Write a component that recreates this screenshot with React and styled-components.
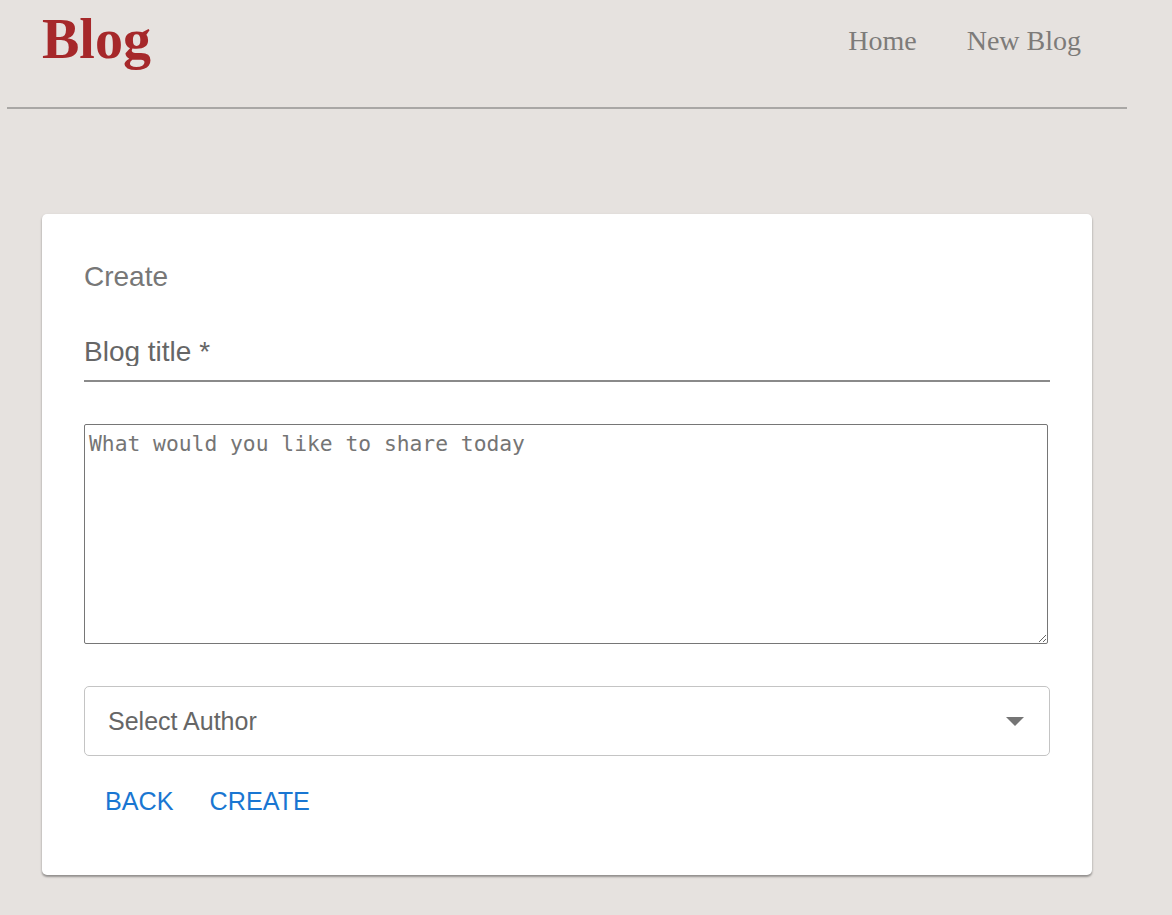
import styled, { createGlobalStyle } from 'styled-components';

const GlobalStyle = createGlobalStyle`
    body {
        margin: 0;
        background-color: #e6e2df;
        font-family: "Liberation Sans", Arial, sans-serif;
    }
`;

const Header = styled.header`
    display: flex;
    justify-content: space-between;
    align-items: flex-start;
    width: 1120px;
    height: 109px;
    margin-left: 7px;
    padding: 0 46px 0 35px;
    box-sizing: border-box;
    border-bottom: 2px solid #a9a7a5;
`;

const Logo = styled.h1`
    margin: 11px 0 0;
    font-family: "Liberation Serif", "Times New Roman", serif;
    font-size: 56px;
    line-height: 1;
    font-weight: 700;
    color: #a6282a;
`;

const Nav = styled.nav`
    display: flex;
    gap: 50px;
    margin-top: 27px;
`;

const NavLink = styled.a`
    font-family: "Liberation Serif", "Times New Roman", serif;
    font-size: 28px;
    line-height: 1;
    color: #7d7b79;
    text-decoration: none;
    cursor: pointer;
`;

const Main = styled.main`
    padding: 105px 0 40px 42px;
`;

const Card = styled.div`
    width: 1050px;
    box-sizing: border-box;
    padding: 49px 42px 61px;
    background-color: #fff;
    border-radius: 5px;
    box-shadow: 0 2px 2px rgba(0, 0, 0, 0.3), 0 1px 3px rgba(0, 0, 0, 0.12);
`;

const Title = styled.div`
    font-size: 28px;
    line-height: 1;
    color: #777;
`;

const TitleField = styled.div`
    margin-top: 47px;
    padding-bottom: 14px;
    border-bottom: 2px solid #8a8a8a;
`;

const TitleInput = styled.input`
    display: block;
    width: 100%;
    padding: 0;
    border: none;
    outline: none;
    font-family: inherit;
    font-size: 28px;
    line-height: 28px;
    height: 28px;
    color: #333;
    &::placeholder {
        color: #666;
    }
`;

const TextArea = styled.textarea`
    display: block;
    box-sizing: border-box;
    width: 964px;
    height: 220px;
    margin-top: 42px;
    padding: 6px 4px;
    border: 1px solid #767676;
    border-radius: 2px;
    font-family: "DejaVu Sans Mono", "Liberation Mono", monospace;
    font-size: 21.3px;
    line-height: 1.2;
    color: #333;
    &::placeholder {
        color: #757575;
    }
`;

const Select = styled.div`
    display: flex;
    align-items: center;
    justify-content: space-between;
    height: 70px;
    box-sizing: border-box;
    margin-top: 42px;
    padding: 0 25px 0 23px;
    border: 1px solid #c4c4c4;
    border-radius: 5px;
    cursor: pointer;
`;

const SelectText = styled.span`
    font-size: 25px;
    color: #666;
`;

const Actions = styled.div`
    display: flex;
    gap: 36px;
    margin-top: 33px;
    padding-left: 21px;
`;

const Button = styled.button`
    padding: 0;
    border: none;
    background: none;
    font-family: inherit;
    font-size: 25.2px;
    line-height: 1;
    color: #1976d2;
    text-transform: uppercase;
    cursor: pointer;
`;

const App = () => {
    return (
        <>
            <GlobalStyle />
            <Header>
                <Logo>Blog</Logo>
                <Nav>
                    <NavLink>Home</NavLink>
                    <NavLink>New Blog</NavLink>
                </Nav>
            </Header>
            <Main>
                <Card>
                    <Title>Create</Title>
                    <TitleField>
                        <TitleInput placeholder="Blog title *" />
                    </TitleField>
                    <TextArea placeholder="What would you like to share today" />
                    <Select>
                        <SelectText>Select Author</SelectText>
                        <svg width="18" height="9" viewBox="0 0 18 9">
                            <path d="M0 0 L18 0 L9 9 Z" fill="#757575" />
                        </svg>
                    </Select>
                    <Actions>
                        <Button>Back</Button>
                        <Button>Create</Button>
                    </Actions>
                </Card>
            </Main>
        </>
    );
};

export default App;
